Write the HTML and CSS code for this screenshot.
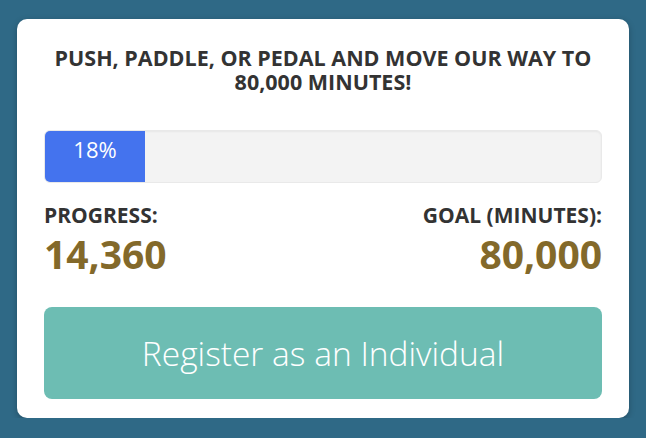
FILE: index.html
```html
<!DOCTYPE html>
<html>
<head>
<meta charset="utf-8">
<title>Minutes Challenge</title>
<link rel="stylesheet" href="styles.css">
</head>
<body>
<div class="card">
	<h2 class="title">Push, paddle, or pedal and move our way to 80,000 minutes!</h2>
	<div class="bar">
		<div class="fill" style="width:18%">18%</div>
	</div>
	<div class="stats">
		<div class="stat">
			<div class="label">Progress:</div>
			<div class="num">14,360</div>
		</div>
		<div class="stat right">
			<div class="label">Goal (minutes):</div>
			<div class="num">80,000</div>
		</div>
	</div>
	<a class="btn" href="#">Register as an Individual</a>
</div>
</body>
</html>
```

FILE: styles.css
```css
html{background:#2f6986;}
body{margin:0; padding:19px 17px 0 17px; font-family:"Open Sans", "Noto Sans", sans-serif;}
.card{background:#fff; border-radius:10px; padding:27px 27px 19px 27px; box-shadow:0 2px 6px rgba(0,0,0,.25);}
.title{margin:0; text-align:center; text-transform:uppercase; font-size:21.5px; line-height:24px; font-weight:700; color:#333;}
.bar{margin-top:36px; height:51px; background:#f3f3f3; border:1px solid #e9e9e9; border-radius:6px; overflow:hidden; display:flex; box-shadow:inset 0 1px 2px rgba(0,0,0,.05);}
.fill{background:#4473ee; color:#fff; font-size:22px; line-height:36px; text-align:center;}
.stats{display:flex; justify-content:space-between; margin-top:18px;}
.stat.right{text-align:right;}
.label{font-size:21px; font-weight:700; color:#333; text-transform:uppercase; line-height:28px;}
.num{font-size:39px; font-weight:700; color:#83692a; line-height:46px; margin-top:2px;}
.btn{display:block; margin-top:30px; height:92px; line-height:92px; background:#6dbdb3; border-radius:8px; color:#fff; text-align:center; text-decoration:none; font-size:33.5px; font-weight:300;}
```
